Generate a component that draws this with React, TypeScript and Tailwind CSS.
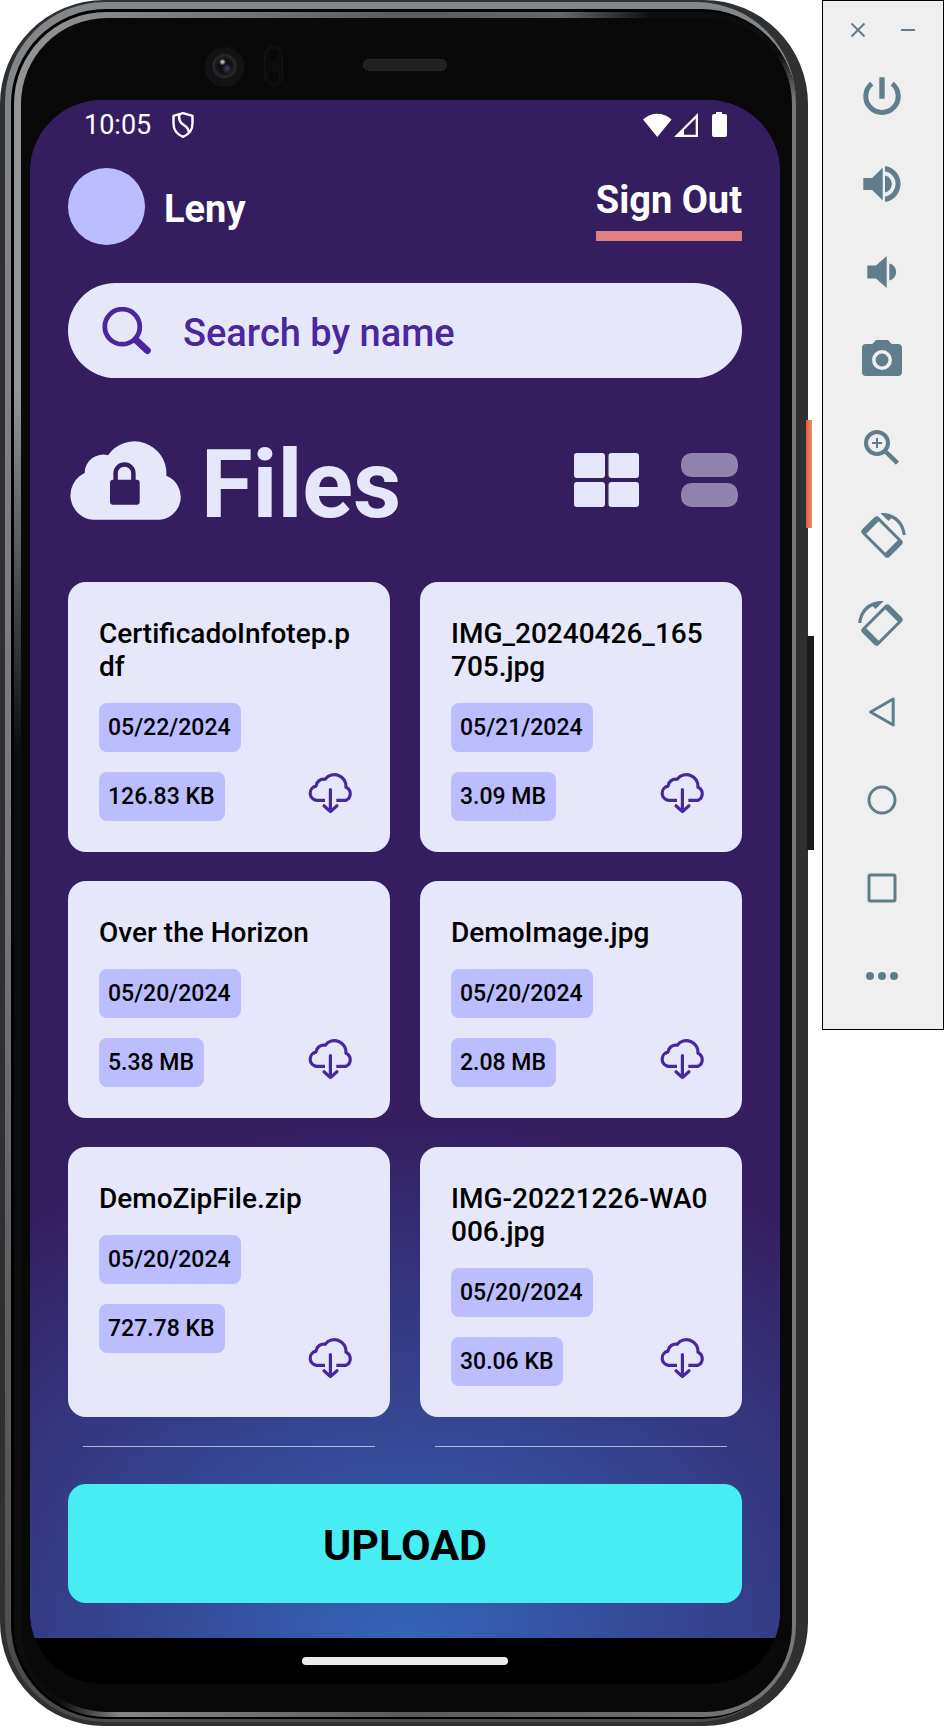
import type { ReactNode } from 'react';

type FileItem = { name: string; date: string; size: string };

const files: FileItem[] = [
  { name: 'CertificadoInfotep.pdf', date: '05/22/2024', size: '126.83 KB' },
  { name: 'IMG_20240426_165705.jpg', date: '05/21/2024', size: '3.09 MB' },
  { name: 'Over the Horizon', date: '05/20/2024', size: '5.38 MB' },
  { name: 'DemoImage.jpg', date: '05/20/2024', size: '2.08 MB' },
  { name: 'DemoZipFile.zip', date: '05/20/2024', size: '727.78 KB' },
  { name: 'IMG-20221226-WA0006.jpg', date: '05/20/2024', size: '30.06 KB' },
];

function DownloadIcon() {
  return (
    <svg width="46" height="43" viewBox="0 0 46 43" fill="none" stroke="#4a279c" strokeWidth="3.200" strokeLinecap="round" strokeLinejoin="round" overflow="visible">
      <path d="M17 29.3H8.4A7.2 7.2 0 0 1 8 15.1A7.8 7.8 0 0 1 17.2 8.2A11.6 11.6 0 0 1 38 16.3A7.100 7.100 0 0 1 38 29.3H28.3" strokeLinecap="butt" />
      <path d="M22.4 18.6V40.4M16 34.8L22.4 40.6L29 34.8" />
    </svg>
  );
}

function FileCard({ file }: { file: FileItem }) {
  return (
    <article className="flex flex-col rounded-[18px] bg-[#e7e7fc] pt-[35px] pr-7 pb-[31px] pl-[31px]">
      <h2 className="text-[28px] leading-[33px] font-medium break-all text-black">{file.name}</h2>
      <div className="mt-5 flex flex-1 items-end justify-between pr-2">
        <div className="flex flex-col items-start gap-5 self-start text-[23px] leading-[48px] font-medium text-black">
          <span className="rounded-lg bg-[#bcbdff] pt-px pr-[10px] pl-[9px]">{file.date}</span>
          <span className="rounded-lg bg-[#bcbdff] pt-px pr-[10px] pl-[9px]">{file.size}</span>
        </div>
        <button type="button" aria-label={`Download ${file.name}`} className="mb-[7px]">
          <DownloadIcon />
        </button>
      </div>
    </article>
  );
}

function StatusBar() {
  return (
    <div className="flex h-[50px] items-center justify-between pr-[53px] pl-[54px] text-white">
      <div className="flex items-center gap-5">
        <span className="text-[27px] leading-8">10:05</span>
        <svg width="24" height="26" viewBox="0 0 24 26" fill="none" stroke="white" strokeWidth="2.4" strokeLinejoin="round">
          <path d="M12 1.2L21.500 3.8V11.5C21.5 18 17.5 22.6 12 24.8C6.500 22.6 2.500 18 2.500 11.500V3.800Z" />
          <path d="M8.500 2.500C7 8 9 10.500 12.500 12.800C16.500 15.500 18.500 17.500 17.500 20.500" />
        </svg>
      </div>
      <svg width="84" height="26" viewBox="0 0 84 26" fill="white">
        <path d="M0 7.600C8.500 -.2 20 -.2 28.600 7.600L14.300 25Z" />
        <path fillRule="evenodd" d="M31 25L55 1V25ZM41 22.700H52.700V6.500L41 18Z" />
        <path d="M73 0H79V2H82A2 2 0 0 1 84 4V23A2 2 0 0 1 82 25H71A2 2 0 0 1 69 23V4A2 2 0 0 1 71 2H73Z" />
      </svg>
    </div>
  );
}

function CloudLock() {
  return (
    <svg width="113" height="79" viewBox="0 0 113 79">
      <path fill="#e7e7fc" d="M25 78.700A24.500 24.500 0 0 1 16.700 32A18.300 18.300 0 0 1 40 14.300A32 32 0 0 1 98.300 34.700A22.800 22.800 0 0 1 90 78.700Z" />
      <rect x="42" y="38.700" width="29.700" height="25" rx="3" fill="#351e60" />
      <path d="M47.600 40V32.300A8.900 8.900 0 0 1 65.400 32.300V40" fill="none" stroke="#351e60" strokeWidth="4.500" />
    </svg>
  );
}

function AppScreen() {
  return (
    <div className="overflow-hidden rounded-[72px] bg-black">
      <div className="bg-[#351e60] bg-[radial-gradient(ellipse_640px_520px_at_50%_100%,#3564b8_0%,#351e60_100%)]">
        <StatusBar />
        <div className="px-[38px] pb-[35px]">
          <header className="flex items-start justify-between pt-[18px]">
            <div className="flex items-center gap-[19px]">
              <div className="size-[77px] rounded-full bg-[#bcbdff]" />
              <span className="pt-1 text-[38px] leading-[46px] font-bold text-white">Leny</span>
            </div>
            <button type="button" className="mt-[9px] border-b-[10px] border-[#e08080] pb-[7px] text-[38px] leading-[47px] font-bold text-white">
              Sign Out
            </button>
          </header>

          <label className="mt-[38px] flex h-[95px] items-center rounded-full bg-[#e7e7fc] pl-[34px]">
            <svg width="50" height="48" viewBox="0 0 50 48" fill="none" stroke="#4a279c" strokeLinecap="round">
              <circle cx="20.300" cy="19.700" r="17.500" strokeWidth="4.800" />
              <path d="M34 33L45.300 43.500" strokeWidth="7" />
            </svg>
            <input
              type="text"
              aria-label="Search by name"
              placeholder="Search by name"
              className="ml-[31px] min-w-0 flex-1 bg-transparent pt-1 text-[38px] leading-[46px] font-medium text-[#4a279c] outline-none placeholder:text-[#4a279c] placeholder:opacity-100"
            />
          </label>

          <div className="mt-[46px] flex h-[112px] items-center justify-between">
            <div className="flex items-center gap-5">
              <CloudLock />
              <h1 className="pt-[10px] text-[94px] leading-[112px] font-bold text-[#e7e7fc]">Files</h1>
            </div>
            <div className="flex items-center gap-[42px] pr-1">
              <button type="button" aria-label="Grid view">
                <svg width="65" height="54" viewBox="0 0 65 54" fill="#e7e7fc">
                  <rect width="31" height="25" rx="3" />
                  <rect x="34.500" width="30.500" height="25" rx="3" />
                  <rect y="29" width="31" height="25" rx="3" />
                  <rect x="34.500" y="29" width="30.500" height="25" rx="3" />
                </svg>
              </button>
              <button type="button" aria-label="List view">
                <svg width="57" height="54" viewBox="0 0 57 54" fill="#8f82ad">
                  <rect width="57" height="24" rx="10.500" />
                  <rect y="30" width="57" height="24" rx="10.500" />
                </svg>
              </button>
            </div>
          </div>

          <div className="mt-[46px] grid grid-cols-2 gap-x-[30px] gap-y-[29px]">
            {files.map((file) => (
              <FileCard key={file.name} file={file} />
            ))}
            <div className="mx-[15px] h-px bg-[#e7e7fc]/70" />
            <div className="mx-[15px] h-px bg-[#e7e7fc]/70" />
          </div>

          <button type="button" className="mt-[37px] h-[119px] w-full rounded-[18px] bg-[#46eef4] pt-[2px] text-[43px] leading-[50px] font-bold text-black">
            UPLOAD
          </button>
        </div>
      </div>
      <div className="flex h-[46px] items-center justify-center">
        <div className="h-2 w-[206px] rounded-full bg-[#ebebeb]" />
      </div>
    </div>
  );
}

function FrontSensors() {
  return (
    <div className="h-[82px]">
      <svg className="w-full" height="82" viewBox="0 0 771 82">
        <defs>
          <radialGradient id="lens">
            <stop offset="0" stopColor="#08080c" />
            <stop offset="0.600" stopColor="#121216" />
            <stop offset="1" stopColor="#2c2d30" />
          </radialGradient>
          <radialGradient id="lensBlue">
            <stop offset="0" stopColor="#3a4468" />
            <stop offset="1" stopColor="#3a4468" stopOpacity="0" />
          </radialGradient>
          <radialGradient id="lensGlint">
            <stop offset="0" stopColor="#f0f0f0" />
            <stop offset="1" stopColor="#d8d8d8" stopOpacity="0" />
          </radialGradient>
        </defs>
        <circle cx="203.500" cy="49" r="20" fill="#131313" />
        <circle cx="203.500" cy="48" r="12" fill="url(#lens)" />
        <circle cx="206" cy="50.500" r="5" fill="url(#lensBlue)" />
        <circle cx="201.500" cy="44" r="3.500" fill="url(#lensGlint)" />
        <rect x="243.500" y="28.500" width="18" height="39" rx="9" fill="#0c0c0d" stroke="#151516" />
        <circle cx="252.500" cy="37" r="6.500" fill="#080808" stroke="#131313" />
        <circle cx="252.500" cy="58" r="6.500" fill="#080808" stroke="#131313" />
        <rect x="342.500" y="41.500" width="83" height="11" rx="5.500" fill="#202020" stroke="#272727" />
      </svg>
    </div>
  );
}

function Phone() {
  return (
    <div className="relative mr-[14px] min-w-0 flex-1">
      <div className="absolute top-[420px] -right-1 h-[108px] w-[6px] bg-linear-to-r from-[#d95f42] to-[#f08a6c]" />
      <div className="absolute top-[636px] -right-[6px] h-[214px] w-[7px] bg-[#1c1c1c]" />
      <div className="rounded-[104px] bg-[#2e3031] pt-[2px] pr-[12px] pb-1 pl-[5px]">
        <div className="rounded-[100px] bg-linear-to-b from-[#84878a] via-[#77787c] to-[#4a4a4c] pt-[7px] pb-[3px] pl-[6px]">
          <div className="rounded-[95px] bg-black pt-[3px] pb-[2px] pl-[3px]">
            <div className="rounded-[92px] bg-[radial-gradient(ellipse_120px_900px_at_0%_75%,#0d0d0d_60%,transparent_100%),radial-gradient(ellipse_180px_90px_at_93%_0%,#0d0d0d_50%,transparent_100%),linear-gradient(to_right,#959595,#5c5c5c_50%,#777777)] pt-[6px] pr-1 pb-[5px] pl-[7px]">
              <div className="rounded-[86px] bg-[#09090a]">
                <FrontSensors />
                <div className="pr-3 pb-7 pl-[9px]">
                  <AppScreen />
                </div>
              </div>
            </div>
          </div>
        </div>
      </div>
    </div>
  );
}

function RotateGlyph() {
  return (
    <>
      <path
        transform="rotate(45 24 25)"
        fillRule="evenodd"
        d="M8 13.200H40A3.300 3.300 0 0 1 43.300 16.500V33.500A3.300 3.300 0 0 1 40 36.800H8A3.300 3.300 0 0 1 4.700 33.500V16.500A3.300 3.300 0 0 1 8 13.200ZM10.500 16.200V33.800H37.500V16.200Z"
      />
      <path d="M22.500 1.200C36 .2 46.500 9 47.700 23H44.700C43.800 15 39.500 9 33.300 6.200L30.500 9Z" />
    </>
  );
}

const controls: { label: string; glyph: ReactNode }[] = [
  {
    label: 'Power',
    glyph: (
      <>
        <path d="M13.800 11.600A16.200 16.200 0 1 0 34.200 11.600" fill="none" stroke="currentColor" strokeWidth="5" />
        <rect x="21.300" y="5.300" width="5.400" height="21.400" rx=".5" />
      </>
    ),
  },
  {
    label: 'Volume up',
    glyph: (
      <>
        <path d="M5.300 18H14L24.700 7.700V40.300L14 30H5.300Z" />
        <path d="M27 15.500A8.700 8.700 0 0 1 27 32.500Z" />
        <path d="M27 6A18.200 18.200 0 0 1 27 42V36.700A12.900 12.900 0 0 0 27 11.300Z" />
      </>
    ),
  },
  {
    label: 'Volume down',
    glyph: (
      <>
        <path d="M9.300 17.500H18L28.700 8V40L18 30.500H9.300Z" />
        <path d="M31.300 15.500A8.700 8.700 0 0 1 31.300 32.500Z" />
      </>
    ),
  },
  {
    label: 'Take screenshot',
    glyph: (
      <>
        <path d="M18 4H30L33.700 8H40A4 4 0 0 1 44 12V36A4 4 0 0 1 40 40H8A4 4 0 0 1 4 36V12A4 4 0 0 1 8 8H14.300Z" />
        <circle cx="24" cy="24" r="8.200" fill="none" stroke="#efefef" strokeWidth="3.600" />
      </>
    ),
  },
  {
    label: 'Zoom',
    glyph: (
      <>
        <circle cx="19" cy="19" r="11" fill="none" stroke="currentColor" strokeWidth="4" />
        <path d="M19 14V24M14 19H24" fill="none" stroke="currentColor" strokeWidth="2" />
        <path d="M28 28L39.500 39.200" fill="none" stroke="currentColor" strokeWidth="4.500" />
      </>
    ),
  },
  { label: 'Rotate left', glyph: <RotateGlyph /> },
  {
    label: 'Rotate right',
    glyph: (
      <g transform="matrix(-1 0 0 1 48 0)">
        <RotateGlyph />
      </g>
    ),
  },
  { label: 'Back', glyph: <path d="M12.500 24L35.200 11V37Z" fill="none" stroke="currentColor" strokeWidth="3" strokeLinejoin="round" /> },
  { label: 'Home', glyph: <circle cx="24" cy="24" r="13" fill="none" stroke="currentColor" strokeWidth="3" /> },
  { label: 'Overview', glyph: <rect x="11" y="11" width="26" height="26" rx="1.500" fill="none" stroke="currentColor" strokeWidth="3" /> },
  {
    label: 'More',
    glyph: (
      <>
        <circle cx="12" cy="24" r="4" />
        <circle cx="24" cy="24" r="4" />
        <circle cx="36" cy="24" r="4" />
      </>
    ),
  },
];

function EmulatorToolbar() {
  return (
    <aside className="flex w-[122px] shrink-0 flex-col border border-black bg-[#efefef] pr-[2px] pb-[9px] text-[#607d8b]">
      <div className="flex h-[51px] items-center justify-center gap-[34px] pt-[6px] pl-[2px]">
        <button type="button" aria-label="Close">
          <svg width="16" height="16" viewBox="0 0 16 16" stroke="currentColor" strokeWidth="2">
            <path d="M1.500 1.500L14.500 14.500M14.500 1.500L1.500 14.500" />
          </svg>
        </button>
        <button type="button" aria-label="Minimize">
          <svg width="16" height="16" viewBox="0 0 16 16" stroke="currentColor" strokeWidth="2">
            <path d="M1 8H15" />
          </svg>
        </button>
      </div>
      {controls.map(({ label, glyph }) => (
        <button key={label} type="button" aria-label={label} className="flex h-[88px] items-center justify-center">
          <svg width="48" height="48" viewBox="0 0 48 48" fill="currentColor" overflow="visible">
            {glyph}
          </svg>
        </button>
      ))}
    </aside>
  );
}

export default function App() {
  return (
    <main className="flex min-h-screen items-start bg-white font-[Roboto,sans-serif]">
      <Phone />
      <EmulatorToolbar />
    </main>
  );
}
